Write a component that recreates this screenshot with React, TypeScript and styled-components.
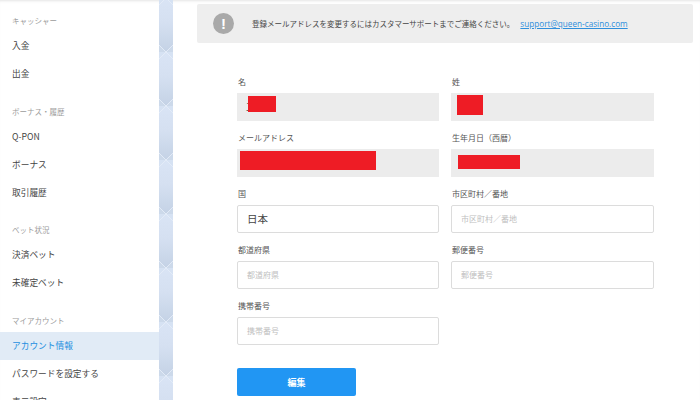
import styled, { createGlobalStyle } from "styled-components";

const GlobalStyle = createGlobalStyle`
  html, body {
    margin: 0;
    padding: 0;
    height: 400px;
    overflow: hidden;
    background: #fff;
  }
  * {
    box-sizing: border-box;
  }
`;

const FONT = `"Noto Sans CJK JP", "Noto Sans", sans-serif`;

const menu = [
  { title: "キャッシャー", items: ["入金", "出金"] },
  { title: "ボーナス・履歴", items: ["Q-PON", "ボーナス", "取引履歴"] },
  { title: "ベット状況", items: ["決済ベット", "未確定ベット"] },
  { title: "マイアカウント", items: ["アカウント情報", "パスワードを設定する", "表示設定"] },
];

const App = () => {
  return (
    <Page>
      <GlobalStyle />
      <Sidebar>
        {menu.map((group) => (
          <MenuGroup key={group.title}>
            <MenuTitle>{group.title}</MenuTitle>
            {group.items.map((item) => (
              <MenuItem key={item} $active={item === "アカウント情報"}>
                {item}
              </MenuItem>
            ))}
          </MenuGroup>
        ))}
      </Sidebar>
      <Strip />
      <Main>
        <Notice>
          <NoticeIcon>!</NoticeIcon>
          <NoticeText>登録メールアドレスを変更するにはカスタマーサポートまでご連絡ください。</NoticeText>
          <NoticeLink>support@queen-casino.com</NoticeLink>
        </Notice>
        <Form>
          <Field>
            <Label>名</Label>
            <ReadOnlyBox>
              工
              <Redaction $left={11} $top={3} $width={28} $height={16} />
            </ReadOnlyBox>
          </Field>
          <Field>
            <Label>姓</Label>
            <ReadOnlyBox>
              <Redaction $left={6} $top={2} $width={26} $height={20} />
            </ReadOnlyBox>
          </Field>
          <Field>
            <Label>メールアドレス</Label>
            <ReadOnlyBox>
              <Redaction $left={3} $top={2} $width={136} $height={19} />
            </ReadOnlyBox>
          </Field>
          <Field>
            <Label>生年月日（西暦）</Label>
            <ReadOnlyBox>
              <Redaction $left={7} $top={6} $width={62} $height={14} />
            </ReadOnlyBox>
          </Field>
          <Field>
            <Label>国</Label>
            <InputBox>日本</InputBox>
          </Field>
          <Field>
            <Label>市区町村／番地</Label>
            <InputBox $empty>市区町村／番地</InputBox>
          </Field>
          <Field>
            <Label>都道府県</Label>
            <InputBox $empty>都道府県</InputBox>
          </Field>
          <Field>
            <Label>郵便番号</Label>
            <InputBox $empty>郵便番号</InputBox>
          </Field>
          <Field>
            <Label>携帯番号</Label>
            <InputBox $empty>携帯番号</InputBox>
          </Field>
        </Form>
        <EditButton>編集</EditButton>
      </Main>
    </Page>
  );
};
export default App;

const Page = styled.div`
  width: 700px;
  height: 400px;
  overflow: hidden;
  display: flex;
  font-family: ${FONT};
  box-shadow: inset 0 3px 3px -2px #e4e4e4;
`;

const Sidebar = styled.nav`
  width: 159px;
  flex-shrink: 0;
  padding-top: 12px;
`;

const MenuGroup = styled.div`
  padding-bottom: 14.7px;
`;

const MenuTitle = styled.div`
  height: 20px;
  padding-left: 12px;
  font-size: 7.5px;
  line-height: 18px;
  color: #9b9b9b;
`;

const MenuItem = styled.div<{ $active?: boolean }>`
  height: 28px;
  padding-left: 12px;
  font-size: 8.7px;
  line-height: 28px;
  color: ${(props) => (props.$active ? "#1f8fe0" : "#444444")};
  background-color: ${(props) => (props.$active ? "#e1ebf6" : "transparent")};
`;

const Strip = styled.div`
  width: 14px;
  flex-shrink: 0;
  background-image:
    linear-gradient(45deg, #ccd9ea 4.4px, #e4ecf8 5px, transparent 5.6px),
    linear-gradient(135deg, #d6e2f3 4.4px, #e4ecf8 5px, transparent 5.6px),
    linear-gradient(225deg, #d6e2f3 4.4px, #e4ecf8 5px, transparent 5.6px),
    linear-gradient(315deg, #ccd9ea 4.4px, #e4ecf8 5px, transparent 5.6px),
    linear-gradient(180deg, #d9e4f5 0%, #d5e0f1 45%, #c4d2e5 100%);
  background-size: 14px 54px;
  background-position: 0 -2px;
`;

const Main = styled.main`
  flex: 1;
  padding: 4px 7px 0 24px;
`;

const Notice = styled.div`
  height: 39px;
  display: flex;
  align-items: center;
  padding-left: 16px;
  background-color: #eeeeee;
  border-radius: 2px;
`;

const NoticeIcon = styled.div`
  width: 21px;
  height: 21px;
  margin-right: 18px;
  border-radius: 50%;
  background-color: #a9a9a9;
  color: #fff;
  font-family: "Liberation Sans", sans-serif;
  font-size: 15px;
  font-weight: 700;
  line-height: 21px;
  text-align: center;
`;

const NoticeText = styled.span`
  font-size: 7.5px;
  color: #444444;
  white-space: nowrap;
`;

const NoticeLink = styled.a`
  margin-left: 2px;
  padding-left: 4px;
  font-family: "Open Sans", sans-serif;
  font-size: 8.2px;
  color: #2f8fdc;
  text-decoration: underline;
  white-space: nowrap;
`;

const Form = styled.div`
  margin: 32px 0 0 40px;
  width: 417px;
  display: grid;
  grid-template-columns: 202px 203px;
  column-gap: 12px;
`;

const Field = styled.div`
  height: 56px;
  display: flex;
  flex-direction: column;
`;

const Label = styled.div`
  height: 18px;
  padding: 0 1px;
  font-size: 8px;
  line-height: 14px;
  color: #555555;
`;

const ReadOnlyBox = styled.div`
  position: relative;
  height: 28px;
  padding-left: 9px;
  background-color: #ececec;
  font-size: 10.5px;
  line-height: 28px;
  color: #444444;
`;

const Redaction = styled.div<{ $left: number; $top: number; $width: number; $height: number }>`
  position: absolute;
  left: ${(props) => props.$left}px;
  top: ${(props) => props.$top}px;
  width: ${(props) => props.$width}px;
  height: ${(props) => props.$height}px;
  background-color: #ee1c25;
`;

const InputBox = styled.div<{ $empty?: boolean }>`
  height: 28px;
  padding-left: 9px;
  border: 1px solid #dcdcdc;
  border-radius: 2px;
  font-size: ${(props) => (props.$empty ? "8px" : "10.5px")};
  line-height: 26px;
  color: ${(props) => (props.$empty ? "#c0c0c0" : "#444444")};
`;

const EditButton = styled.button`
  display: block;
  margin: 13px 0 0 40px;
  width: 119px;
  height: 28px;
  border: 0;
  border-radius: 2px;
  background-color: #2196f3;
  color: #fff;
  font-family: ${FONT};
  font-size: 9px;
  font-weight: 700;
`;
